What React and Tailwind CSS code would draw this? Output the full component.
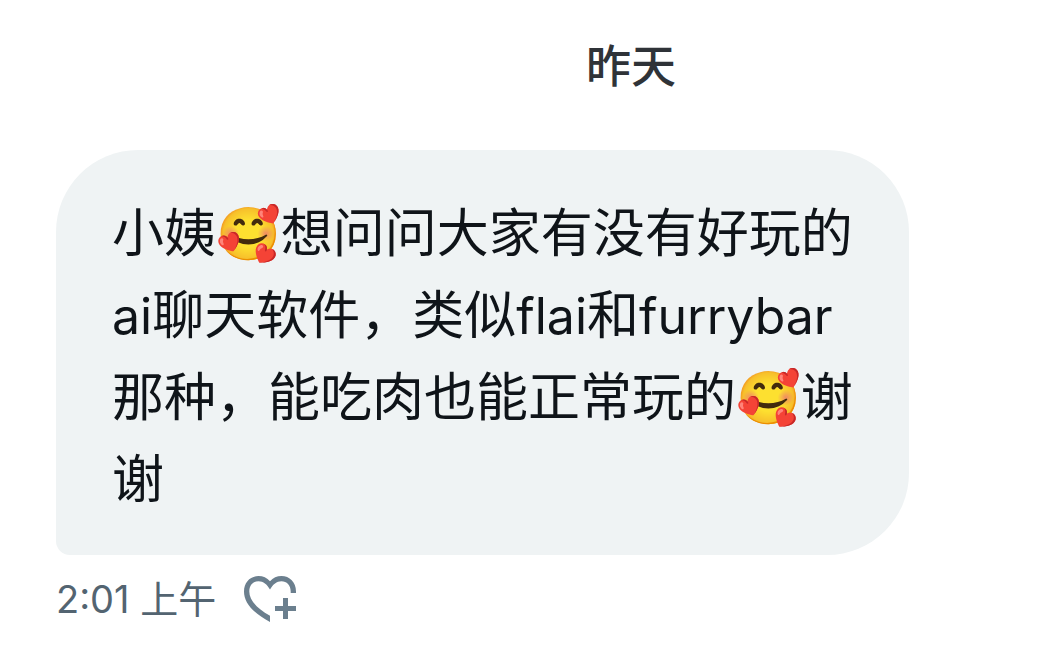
const latin = "text-[50px]";

function HeartPlusIcon() {
  return (
    <svg viewBox="0 0 52 46" className="h-[46px] w-[52px]" fill="currentColor" aria-hidden="true">
      <path d="M26 46C8.500 36.500 0 26.500 0 15.500C0 6 6.500 0 14.500 0C19 0 23 1.800 26 5.300C29 1.800 33 0 37.500 0C45.500 0 52 6 52 15.500V17H46.700V15.500C46.700 9 42.700 5.200 37.500 5.200C32.500 5.200 29.200 8.200 26 13.500C22.800 8.200 19.500 5.200 14.500 5.200C9.300 5.200 5.300 9 5.300 15.500C5.300 23.500 12 32 26 39.800Z" />
      <path d="M39 22H44V30H52V35H44V43H39V35H31V30H39Z" />
    </svg>
  );
}

function Emoji() {
  return <span className="font-['Noto_Color_Emoji',sans-serif] leading-none">🥰</span>;
}

export default function App() {
  return (
    <main className="min-h-screen bg-white pl-14 pt-[37px] font-['Inter','Noto_Sans_CJK_SC',sans-serif]" lang="zh-CN">
      <h2 className="pl-[156px] text-center text-[45px] font-medium leading-[60px] text-[#2f3338]">昨天</h2>
      <article className="mr-[141px] mt-[53px] rounded-[82px] rounded-bl-[14px] bg-[#eff3f4] px-14 pb-[34px] pt-[43px]">
        <p className="whitespace-nowrap text-[52px] leading-[82px] text-[#0f1419]">
          小姨<Emoji />想问问大家有没有好玩的<br />
          <span className={latin}>ai</span>聊天软件，类似<span className={latin}>flai</span>和<span className={latin}>furrybar</span><br />
          那种，能吃肉也能正常玩的<Emoji />谢<br />
          谢
        </p>
      </article>
      <footer className="mt-[19px] flex items-center gap-7 text-[#536471]">
        <time className="text-[38px] leading-[50px]">2:01 上午</time>
        <button type="button" aria-label="添加回应" className="text-[#6b7f8e]">
          <HeartPlusIcon />
        </button>
      </footer>
    </main>
  );
}
